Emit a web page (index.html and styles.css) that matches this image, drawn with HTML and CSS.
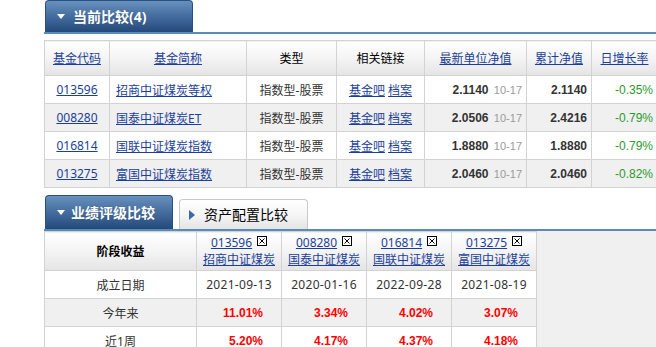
FILE: index.html
```html
<!DOCTYPE html>
<html lang="zh-CN">
<head>
<meta charset="utf-8">
<title>基金比较</title>
<link rel="stylesheet" href="styles.css">
</head>
<body>
<div class="page">
  <div class="tabbar tabbar-top">
    <div class="tab tab-active tab-wide"><span class="tri-down"></span><span class="tab-label">当前比较(4)</span></div>
  </div>

  <table class="cmp">
    <colgroup>
      <col class="c1"><col class="c2"><col class="c3"><col class="c4"><col class="c5"><col class="c6"><col class="c7">
    </colgroup>
    <thead>
      <tr>
        <th><a href="#">基金代码</a></th>
        <th><a href="#">基金简称</a></th>
        <th>类型</th>
        <th>相关链接</th>
        <th><a href="#">最新单位净值</a></th>
        <th><a href="#">累计净值</a></th>
        <th><a href="#">日增长率</a></th>
      </tr>
    </thead>
    <tbody>
      <tr>
        <td class="ctr"><a href="#">013596</a></td>
        <td class="name"><a href="#">招商中证煤炭等权</a></td>
        <td class="ctr txt">指数型-股票</td>
        <td class="ctr"><a href="#">基金吧</a> <a href="#">档案</a></td>
        <td class="num"><b>2.1140</b> <span class="date">10-17</span></td>
        <td class="num"><b>2.1140</b></td>
        <td class="num green">-0.35%</td>
      </tr>
      <tr class="alt">
        <td class="ctr"><a href="#">008280</a></td>
        <td class="name"><a href="#">国泰中证煤炭ET</a></td>
        <td class="ctr txt">指数型-股票</td>
        <td class="ctr"><a href="#">基金吧</a> <a href="#">档案</a></td>
        <td class="num"><b>2.0506</b> <span class="date">10-17</span></td>
        <td class="num"><b>2.4216</b></td>
        <td class="num green">-0.79%</td>
      </tr>
      <tr>
        <td class="ctr"><a href="#">016814</a></td>
        <td class="name"><a href="#">国联中证煤炭指数</a></td>
        <td class="ctr txt">指数型-股票</td>
        <td class="ctr"><a href="#">基金吧</a> <a href="#">档案</a></td>
        <td class="num"><b>1.8880</b> <span class="date">10-17</span></td>
        <td class="num"><b>1.8880</b></td>
        <td class="num green">-0.79%</td>
      </tr>
      <tr class="alt">
        <td class="ctr"><a href="#">013275</a></td>
        <td class="name"><a href="#">富国中证煤炭指数</a></td>
        <td class="ctr txt">指数型-股票</td>
        <td class="ctr"><a href="#">基金吧</a> <a href="#">档案</a></td>
        <td class="num"><b>2.0460</b> <span class="date">10-17</span></td>
        <td class="num"><b>2.0460</b></td>
        <td class="num green">-0.82%</td>
      </tr>
    </tbody>
  </table>

  <div class="tabbar tabbar-second">
    <div class="tab tab-active tab-mid"><span class="tri-down"></span><span class="tab-label">业绩评级比较</span></div>
    <div class="tab tab-idle"><span class="tri-right"></span><span class="tab-label">资产配置比较</span></div>
  </div>

  <div class="perf-wrap">
    <table class="perf">
      <colgroup>
        <col class="p1"><col class="p2"><col class="p2"><col class="p2"><col class="p2">
      </colgroup>
      <thead>
        <tr>
          <th class="stage">阶段收益</th>
          <th><div class="fund-code"><a href="#">013596</a><span class="xbox"><svg viewBox="0 0 10 10" width="10" height="10"><rect x="0.5" y="0.5" width="9" height="9" fill="#fff" stroke="#000"/><path d="M2.5 2.5 L7.5 7.5 M7.5 2.5 L2.5 7.5" stroke="#000" stroke-width="1"/></svg></span></div><div class="fund-name"><a href="#">招商中证煤炭</a></div></th>
          <th><div class="fund-code"><a href="#">008280</a><span class="xbox"><svg viewBox="0 0 10 10" width="10" height="10"><rect x="0.5" y="0.5" width="9" height="9" fill="#fff" stroke="#000"/><path d="M2.5 2.5 L7.5 7.5 M7.5 2.5 L2.5 7.5" stroke="#000" stroke-width="1"/></svg></span></div><div class="fund-name"><a href="#">国泰中证煤炭</a></div></th>
          <th><div class="fund-code"><a href="#">016814</a><span class="xbox"><svg viewBox="0 0 10 10" width="10" height="10"><rect x="0.5" y="0.5" width="9" height="9" fill="#fff" stroke="#000"/><path d="M2.5 2.5 L7.5 7.5 M7.5 2.5 L2.5 7.5" stroke="#000" stroke-width="1"/></svg></span></div><div class="fund-name"><a href="#">国联中证煤炭</a></div></th>
          <th><div class="fund-code"><a href="#">013275</a><span class="xbox"><svg viewBox="0 0 10 10" width="10" height="10"><rect x="0.5" y="0.5" width="9" height="9" fill="#fff" stroke="#000"/><path d="M2.5 2.5 L7.5 7.5 M7.5 2.5 L2.5 7.5" stroke="#000" stroke-width="1"/></svg></span></div><div class="fund-name"><a href="#">富国中证煤炭</a></div></th>
        </tr>
      </thead>
      <tbody>
        <tr>
          <td class="ctr txt">成立日期</td>
          <td class="ctr txt dt">2021-09-13</td>
          <td class="ctr txt dt">2020-01-16</td>
          <td class="ctr txt dt">2022-09-28</td>
          <td class="ctr txt dt">2021-08-19</td>
        </tr>
        <tr class="alt">
          <td class="ctr txt">今年来</td>
          <td class="pct">11.01%</td>
          <td class="pct">3.34%</td>
          <td class="pct">4.02%</td>
          <td class="pct">3.07%</td>
        </tr>
        <tr>
          <td class="ctr txt">近1周</td>
          <td class="pct">5.20%</td>
          <td class="pct">4.17%</td>
          <td class="pct">4.37%</td>
          <td class="pct">4.18%</td>
        </tr>
      </tbody>
    </table>
  </div>
</div>
</body>
</html>
```

FILE: styles.css
```css
html, body {
  margin: 0;
  padding: 0;
  overflow: hidden;
  background: #fff;
}
body {
  font-family: "Noto Sans", "Noto Sans CJK SC", sans-serif;
  font-size: 12px;
  color: #333;
}
a {
  color: #1c3f9a;
  text-decoration: underline;
}
.page {
  margin-left: 44px;
  width: 613px;
}

/* tabs */
.tabbar {
  display: flex;
  align-items: flex-end;
  gap: 6px;
  padding-left: 1px;
  border-bottom: 2px solid #5b8cb9;
}
.tabbar-top {
  height: 32px;
}
.tabbar-second {
  height: 34px;
  margin-top: 7px;
}
.tab {
  box-sizing: border-box;
  display: flex;
  align-items: center;
  border-radius: 4px 4px 0 0;
  font-size: 14px;
  line-height: 16px;
}
.tab-active {
  background: linear-gradient(#6890bd 0%, #4770a1 45%, #24497b 100%);
  border: 1px solid #2a4f80;
  border-bottom: none;
  color: #fff;
  font-weight: bold;
  padding-left: 11px;
  text-shadow: 0 0 1px rgba(0,0,0,0.3);
}
.tab-wide {
  width: 148px;
  height: 32px;
}
.tab-mid {
  width: 128px;
  height: 34px;
}
.tab-idle {
  width: 129px;
  height: 30px;
  background: linear-gradient(#ffffff 0%, #f6f6f6 50%, #e4e4e4 100%);
  border: 1px solid #c9c9c9;
  border-bottom: none;
  color: #000;
  padding-left: 9px;
}
.tri-down {
  width: 0;
  height: 0;
  border-left: 4px solid transparent;
  border-right: 4px solid transparent;
  border-top: 5px solid #fff;
  margin-right: 8px;
}
.tab-mid .tri-down {
  margin-right: 6px;
}
.tri-right {
  width: 0;
  height: 0;
  border-top: 5px solid transparent;
  border-bottom: 5px solid transparent;
  border-left: 6px solid #3b69a6;
  margin-right: 9px;
}

/* table 1 */
.cmp {
  margin-top: 6px;
  border-collapse: collapse;
  table-layout: fixed;
  width: 613px;
}
.cmp col.c1 { width: 65px; }
.cmp col.c2 { width: 137px; }
.cmp col.c3 { width: 90px; }
.cmp col.c4 { width: 88px; }
.cmp col.c5 { width: 102px; }
.cmp col.c6 { width: 65px; }
.cmp col.c7 { width: 66px; }
.cmp th, .cmp td, .perf th, .perf td {
  border: 1px solid #d3d3d3;
  padding: 0;
  white-space: nowrap;
  overflow: hidden;
}
.cmp th {
  height: 34px;
  background: linear-gradient(#ffffff 0%, #f4f4f4 50%, #e4e4e4 100%);
  font-weight: normal;
  color: #000;
  text-align: center;
}
.cmp td {
  height: 27px;
}
.cmp tr.alt td, .perf tr.alt td {
  background: #f0f0f0;
}
.ctr { text-align: center; }
.txt { color: #333; }
.name { text-align: left; padding-left: 6px !important; }
.num {
  text-align: right;
  padding-right: 4px !important;
  font-family: "Liberation Sans", Arial, sans-serif;
}
.num b {
  color: #333;
  font-size: 12px;
}
.date {
  color: #999;
  font-size: 11px;
  margin-left: 2px;
}
.green {
  color: #2b9a2b;
  font-size: 12px;
}

/* table 2 */
.perf-wrap {
  background: #f0f0f0;
  height: 130px;
}
.perf {
  border-collapse: collapse;
  table-layout: fixed;
  width: 493px;
  background: #fff;
}
.perf col.p1 { width: 152px; }
.perf col.p2 { width: 85px; }
.perf th {
  height: 38px;
  background: linear-gradient(#ffffff 0%, #f4f4f4 50%, #e4e4e4 100%);
  font-weight: normal;
  text-align: center;
  vertical-align: middle;
}
.perf th.stage {
  font-weight: bold;
  color: #000;
}
.fund-code {
  display: flex;
  justify-content: center;
  align-items: center;
  gap: 5px;
  height: 16px;
  line-height: 16px;
}
.xbox {
  display: flex;
  width: 10px;
  height: 10px;
  margin-top: -4px;
}
.fund-name {
  height: 17px;
  line-height: 17px;
}
.perf td {
  height: 27px;
}
.dt {
  letter-spacing: 0.3px;
}
.pct {
  text-align: right;
  padding-right: 18px !important;
  color: #f00;
  font-weight: bold;
  font-family: "Liberation Sans", Arial, sans-serif;
}
```
